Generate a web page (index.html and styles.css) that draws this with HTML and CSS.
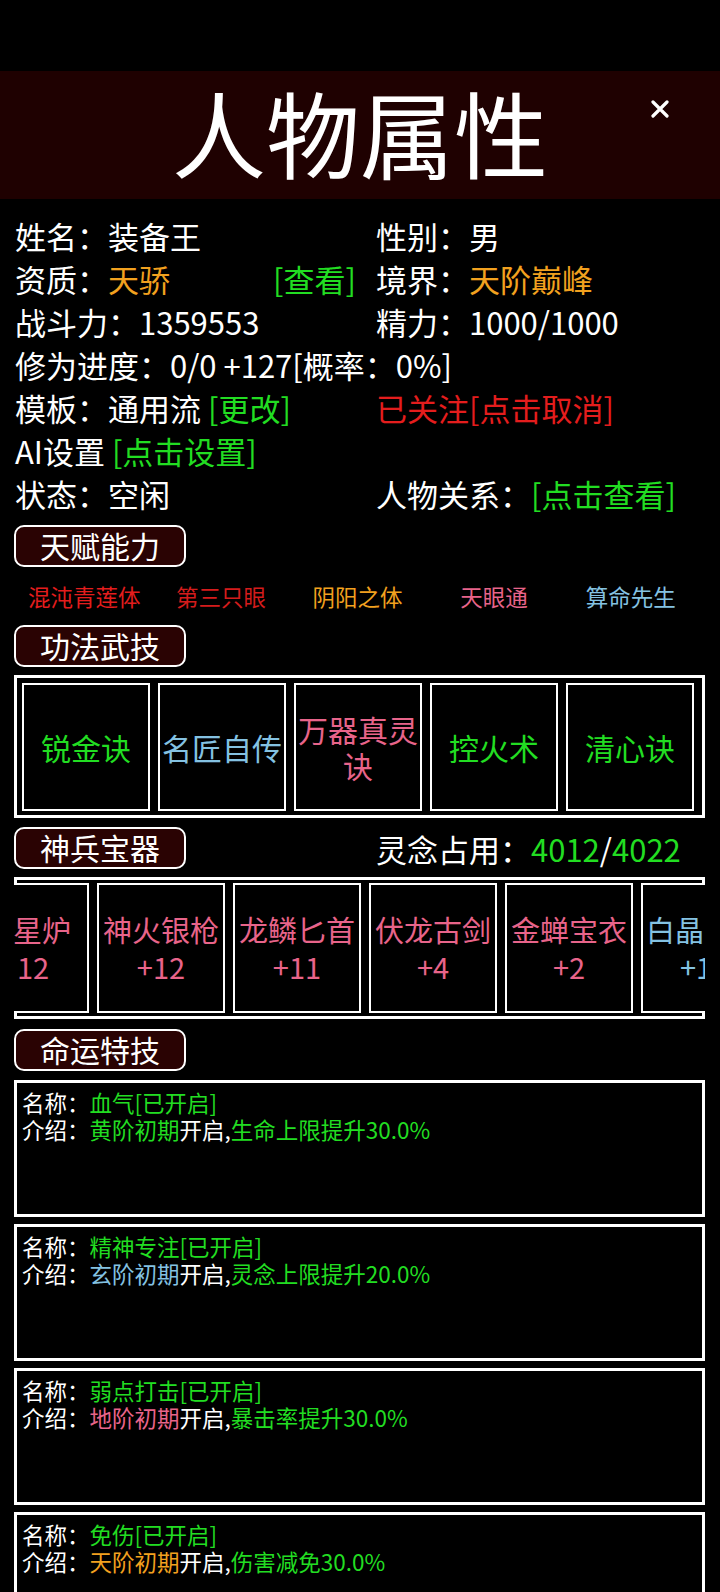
FILE: index.html
```html
<!DOCTYPE html>
<html lang="zh-CN">
<head>
  <meta charset="UTF-8">
  <meta name="viewport" content="width=device-width, initial-scale=1.0">
  <title>人物属性</title>
  <link rel="stylesheet" href="styles.css">
</head>
<body>
  <!-- status bar area -->
  <div class="statusbar"></div>

  <!-- Title band -->
  <header class="title-bar">
    <h1>人物属性</h1>
    <svg class="close" width="18" height="18" viewBox="0 0 18 18">
      <path d="M2 2 L16 16 M16 2 L2 16" stroke="#fff" stroke-width="3.2" stroke-linecap="round"/>
    </svg>
  </header>

  <!-- Basic info -->
  <section class="info">
    <div>姓名：装备王</div>
    <div>性别：男</div>
    <div class="split">
      <span>资质：<span class="orange">天骄</span></span>
      <span class="green">[查看]</span>
    </div>
    <div>境界：<span class="orange">天阶巅峰</span></div>
    <div>战斗力：1359553</div>
    <div>精力：1000/1000</div>
    <div class="wide">修为进度：0/0 +127[概率：0%]</div>
    <div>模板：通用流 <span class="green">[更改]</span></div>
    <div class="red">已关注[点击取消]</div>
    <div class="wide">AI设置 <span class="green">[点击设置]</span></div>
    <div>状态：空闲</div>
    <div>人物关系：<span class="green">[点击查看]</span></div>
  </section>

  <div class="badge">天赋能力</div>
  <div class="talents">
    <span class="red">混沌青莲体</span>
    <span class="dark-red">第三只眼</span>
    <span class="orange">阴阳之体</span>
    <span class="pink">天眼通</span>
    <span class="blue">算命先生</span>
  </div>

  <div class="badge">功法武技</div>
  <div class="skill-box">
    <div class="skill green">锐金诀</div>
    <div class="skill blue">名匠自传</div>
    <div class="skill pink">万器真灵诀</div>
    <div class="skill green">控火术</div>
    <div class="skill green">清心诀</div>
  </div>

  <div class="weapon-head">
    <div class="badge flat">神兵宝器</div>
    <div class="spirit">灵念占用：<span class="green">4012</span>/<span class="green">4022</span></div>
  </div>
  <div class="weapon-box">
    <div class="strip">
      <div class="strip-row">
        <div class="w-card pink head"><div class="w-name">星炉</div><div class="w-lv">12</div></div>
        <div class="w-card pink"><div class="w-name">神火银枪</div><div class="w-lv">+12</div></div>
        <div class="w-card pink"><div class="w-name">龙鳞匕首</div><div class="w-lv">+11</div></div>
        <div class="w-card pink"><div class="w-name">伏龙古剑</div><div class="w-lv">+4</div></div>
        <div class="w-card pink"><div class="w-name">金蝉宝衣</div><div class="w-lv">+2</div></div>
        <div class="w-card blue tail"><div class="w-name">白晶</div><div class="w-lv">+1</div></div>
      </div>
    </div>
  </div>

  <div class="badge">命运特技</div>
  <div class="fate-list">
    <div class="fate">
      <div>名称：<span class="green">血气[已开启]</span></div>
      <div>介绍：<span class="green">黄阶初期</span>开启,<span class="green">生命上限提升30.0%</span></div>
    </div>
    <div class="fate">
      <div>名称：<span class="green">精神专注[已开启]</span></div>
      <div>介绍：<span class="blue">玄阶初期</span>开启,<span class="green">灵念上限提升20.0%</span></div>
    </div>
    <div class="fate">
      <div>名称：<span class="green">弱点打击[已开启]</span></div>
      <div>介绍：<span class="pink">地阶初期</span>开启,<span class="green">暴击率提升30.0%</span></div>
    </div>
    <div class="fate">
      <div>名称：<span class="green">免伤[已开启]</span></div>
      <div>介绍：<span class="orange">天阶初期</span>开启,<span class="green">伤害减免30.0%</span></div>
    </div>
  </div>
</body>
</html>
```

FILE: styles.css
```css
/* page */
body {
  margin: 0;
  background: #000;
  color: #fff;
  font-family: "Noto Sans CJK SC", "Noto Sans", sans-serif;
  overflow: hidden;
}

/* text colours */
.green { color: #22dd22; }
.orange { color: #f2a11f; }
.red { color: #e41d1d; }
.dark-red { color: #d41c1c; }
.pink { color: #e8648a; }
.blue { color: #84c2e2; }

.statusbar {
  height: 71px;
}

/* title band */
.title-bar {
  position: relative;
  height: 128px;
  background: #1f0101;
}

.title-bar h1 {
  margin: 0;
  font-size: 94px;
  font-weight: normal;
  line-height: 120px;
  text-align: center;
}

.close {
  position: absolute;
  left: 651px;
  top: 29px;
}

/* basic info grid */
.info {
  display: grid;
  grid-template-columns: 361px 1fr;
  padding: 15px 0 0 15px;
  font-size: 31px;
  line-height: 43px;
  white-space: nowrap;
}

.info .wide {
  grid-column: 1 / -1;
}

.info .split {
  display: flex;
  justify-content: space-between;
  padding-right: 20px;
}

/* section badges */
.badge {
  box-sizing: border-box;
  width: 172px;
  height: 42px;
  margin: 10px 0 0 14px;
  border: 2px solid #fff;
  border-radius: 10px;
  background: #2a0303;
  font-size: 30px;
  line-height: 37px;
  text-align: center;
}

.badge + .badge,
.talents + .badge {
  margin-top: 0;
}

/* talents */
.talents {
  display: grid;
  grid-template-columns: repeat(5, 1fr);
  margin: 0 21px 0 16px;
  height: 58px;
  font-size: 22.5px;
  line-height: 58px;
  text-align: center;
  white-space: nowrap;
}

/* skills */
.skill-box {
  display: flex;
  gap: 8px;
  margin: 8px 15px 0 14px;
  padding: 5px 8px 4px 5px;
  border: 3px solid #fff;
}

.skill {
  box-sizing: border-box;
  flex: none;
  width: 128px;
  height: 128px;
  border: 2px solid #fff;
  display: flex;
  align-items: center;
  justify-content: center;
  font-size: 30px;
  line-height: 36px;
  text-align: center;
}

/* weapons */
.weapon-head {
  display: grid;
  grid-template-columns: 362px 1fr;
  margin: 9px 0 0 14px;
  height: 42px;
}

.weapon-head .badge.flat {
  margin: 0;
}

.spirit {
  font-size: 31px;
  line-height: 44px;
  white-space: nowrap;
}

.weapon-box {
  margin: 8px 15px 0 14px;
  padding: 3px 0;
  border: 3px solid #fff;
}

.strip {
  margin: 0 -3px;
  height: 130px;
  background: #000;
  overflow: hidden;
}

.strip-row {
  display: flex;
  gap: 8px;
  margin-left: -53px;
}

.w-card {
  box-sizing: border-box;
  flex: none;
  width: 128px;
  height: 130px;
  border: 2px solid #fff;
  display: flex;
  flex-direction: column;
  justify-content: center;
  font-size: 29px;
  line-height: 37px;
  text-align: center;
  white-space: nowrap;
}

.w-card.head {
  text-align: left;
}

.w-card.head .w-name {
  padding-left: 50px;
}

.w-card.head .w-lv {
  padding-left: 54px;
}

.w-card.tail {
  text-align: left;
}

.w-card.tail .w-name {
  padding-left: 3px;
}

.w-card.tail .w-lv {
  padding-left: 37px;
}

/* destiny skills */
.fate-list {
  display: flex;
  flex-direction: column;
  gap: 7px;
  margin: 9px 15px 0 14px;
}

.fate {
  box-sizing: border-box;
  flex: none;
  height: 137px;
  padding: 6px 5px;
  border: 3px solid #fff;
  font-size: 22.5px;
  line-height: 27px;
  white-space: nowrap;
}
```
